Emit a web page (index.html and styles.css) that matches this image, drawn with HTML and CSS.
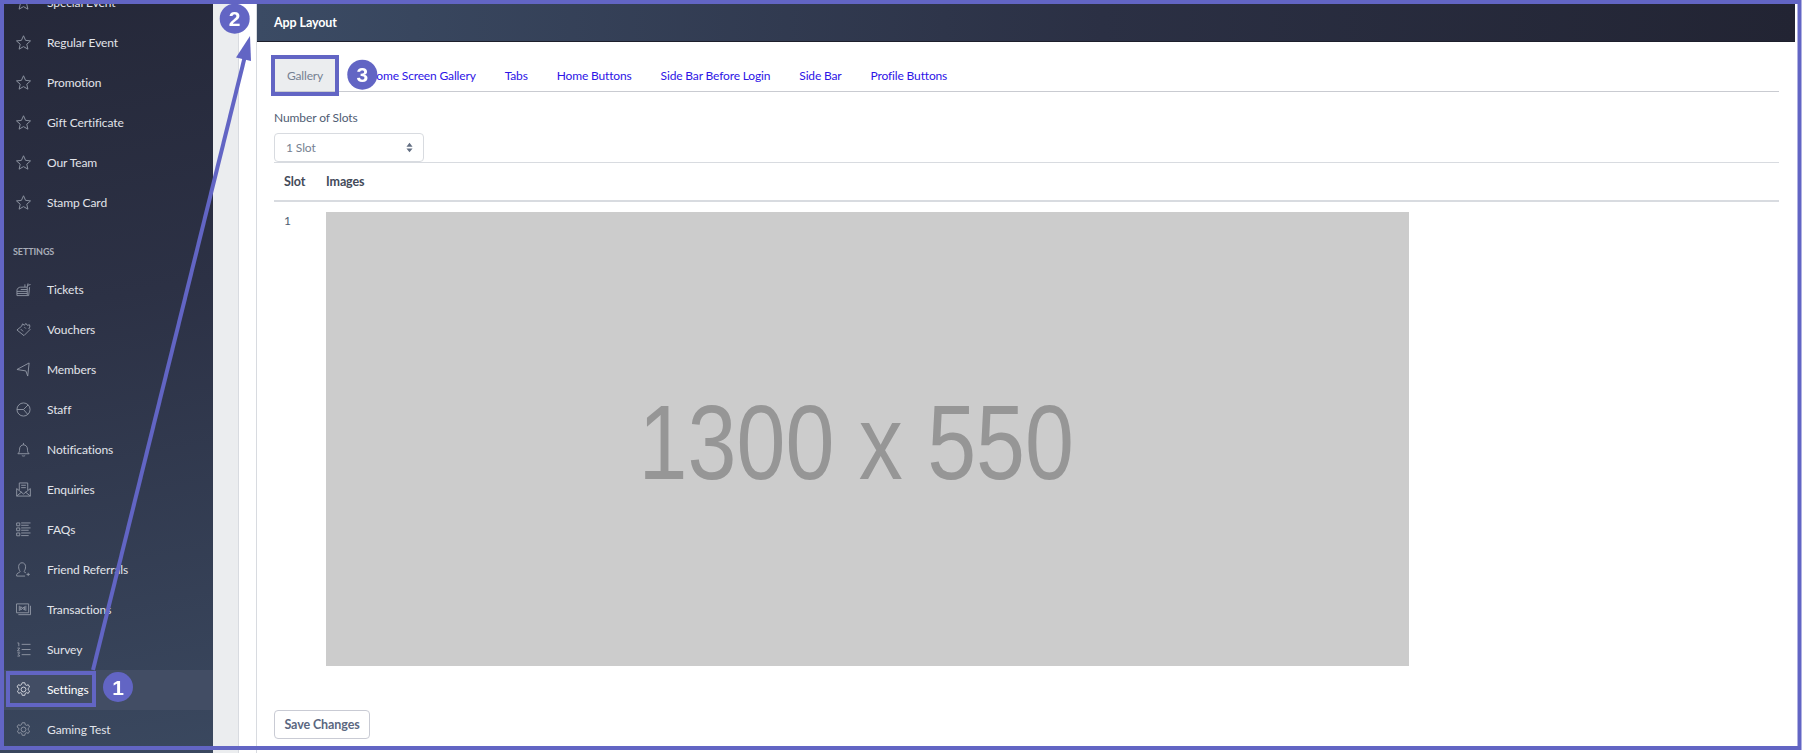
FILE: index.html
```html
<!DOCTYPE html>
<html lang="en">
<head>
<meta charset="utf-8">
<title>App Layout</title>
<link rel="stylesheet" href="styles.css">
</head>
<body>
<svg width="0" height="0" class="defs">
  <defs>
    <symbol id="i-star" viewBox="0 0 16 16"><path d="M8 .8l2.200 4.900 5.300.6-4 3.500 1.200 5.300L8 12.400l-4.700 2.700 1.200-5.300-4-3.500 5.300-.6z"/></symbol>
    <symbol id="i-ticket" viewBox="0 0 16 16"><path d="M1 14.500h11V5.500H5C3 5.500 1 7 1 9zM1 10h11M1 12.200h11M5 8h7M9.500 5.500V2.500M12 5.500l.8-4M12.500 3.500l3-.8M12 14.500h1.500l1-9"/></symbol>
    <symbol id="i-voucher" viewBox="0 0 16 16"><path d="M1 8.500L6 4.500 7 2l2 1.500L10.500 1.500 12 3.500l2.500-.5.300 2.500-1.300 1 1.500 1.500-6.500 6.500zM5 7.500l2.500 2.500M9 5.500l1.500 1.500"/></symbol>
    <symbol id="i-send" viewBox="0 0 16 16"><path d="M14 1L1 8l9.500 1.500L12.500 15z"/></symbol>
    <symbol id="i-pie" viewBox="0 0 16 16"><circle cx="8" cy="8" r="7"/><path d="M8 8L13 3M8 8L12.500 13.200M8 8H1"/></symbol>
    <symbol id="i-bell" viewBox="0 0 16 16"><path d="M2 12.500c1.500-1.200 1.800-2.500 1.800-5C3.800 5 5.700 3 8 3s4.200 2 4.200 4.500c0 2.500.3 3.800 1.800 5zM6.200 14.200c.5 1 3.100 1 3.600 0M8 1v2"/></symbol>
    <symbol id="i-mail" viewBox="0 0 16 16"><path d="M.7 7v8h14.600V7M.7 15l5.500-4.500M15.300 15l-5.500-4.500M3.500 8.500V1h9v7.500M.7 7L8 12.800 15.300 7M5.500 3.500h5M5.500 6h5"/></symbol>
    <symbol id="i-faq" viewBox="0 0 16 16"><path d="M.7 1h3.300v3H.7zM.7 6.300h3.300v3H.7zM.7 11.700h3.300v3H.7zM5.500 1h10M5.500 3.500h8M5.500 6.300h10M5.500 8.800h8M5.500 11.700h10M5.500 14.500h8"/></symbol>
    <symbol id="i-user" viewBox="0 0 16 16"><path d="M.7 15v-1.500C.7 12 3.500 11.500 4.500 10.200 3.300 8.500 2.800 7 2.800 5c0-2.500 1.500-4.200 3.700-4.200S10.200 2.500 10.200 5c0 2-.5 3.500-1.700 5.200.5.600 1 .9 2 1.300M.7 15h9M13 11.500v3.500M11.200 13.200h3.600"/></symbol>
    <symbol id="i-cash" viewBox="0 0 16 16"><path d="M.5 2h13v9.500H.5zM15.500 4v9.500h-13M3.500 4v5.500M10.500 4v5.500M5 5l2.200 1.700L5 8.500zM9 5L7 6.700 9 8.500z"/></symbol>
    <symbol id="i-num" viewBox="0 0 16 16"><path d="M6 2.500h9.500M6 8h9.500M6 13.500h9.500M1.500 1H3v3.500M1.500 6.500H4L1.500 9.500H4M1.500 11.500H4L2.500 13 4 15H1.500"/></symbol>
    <symbol id="i-gear" viewBox="0 0 16 16"><circle cx="8" cy="8" r="2.600"/><path d="M6.600.8h2.800l.4 2 1.400.8 1.900-.7 1.400 2.400-1.500 1.400v1.600l1.500 1.400-1.400 2.400-1.900-.7-1.400.8-.4 2H6.600l-.4-2-1.400-.8-1.900.7-1.400-2.400 1.500-1.400V6.700L1.100 5.300l1.400-2.400 1.900.7 1.400-.8z"/></symbol>
  </defs>
</svg>

<div class="shell">
  <aside class="sidebar">
    <nav class="side-nav">
      <a class="side-item"><svg class="ico"><use href="#i-star"/></svg>Special Event</a>
      <a class="side-item"><svg class="ico"><use href="#i-star"/></svg>Regular Event</a>
      <a class="side-item"><svg class="ico"><use href="#i-star"/></svg>Promotion</a>
      <a class="side-item"><svg class="ico"><use href="#i-star"/></svg>Gift Certificate</a>
      <a class="side-item"><svg class="ico"><use href="#i-star"/></svg>Our Team</a>
      <a class="side-item"><svg class="ico"><use href="#i-star"/></svg>Stamp Card</a>
      <div class="side-title">SETTINGS</div>
      <a class="side-item"><svg class="ico"><use href="#i-ticket"/></svg>Tickets</a>
      <a class="side-item"><svg class="ico"><use href="#i-voucher"/></svg>Vouchers</a>
      <a class="side-item"><svg class="ico"><use href="#i-send"/></svg>Members</a>
      <a class="side-item"><svg class="ico"><use href="#i-pie"/></svg>Staff</a>
      <a class="side-item"><svg class="ico"><use href="#i-bell"/></svg>Notifications</a>
      <a class="side-item"><svg class="ico"><use href="#i-mail"/></svg>Enquiries</a>
      <a class="side-item"><svg class="ico"><use href="#i-faq"/></svg>FAQs</a>
      <a class="side-item"><svg class="ico"><use href="#i-user"/></svg>Friend Referrals</a>
      <a class="side-item"><svg class="ico"><use href="#i-cash"/></svg>Transactions</a>
      <a class="side-item"><svg class="ico"><use href="#i-num"/></svg>Survey</a>
      <a class="side-item is-active"><svg class="ico"><use href="#i-gear"/></svg>Settings</a>
      <a class="side-item"><svg class="ico"><use href="#i-gear"/></svg>Gaming Test</a>
    </nav>
  </aside>
  <div class="strip-gray"></div>
  <div class="strip-white"></div>
  <main class="card">
    <header class="card-head">App Layout</header>
    <div class="card-body">
      <ul class="tabs">
        <li class="tab is-active">Gallery</li>
        <li class="tab tab-home">Home Screen Gallery</li>
        <li class="tab">Tabs</li>
        <li class="tab">Home Buttons</li>
        <li class="tab">Side Bar Before Login</li>
        <li class="tab">Side Bar</li>
        <li class="tab">Profile Buttons</li>
      </ul>
      <label class="field-label">Number of Slots</label>
      <div class="select">1 Slot
        <svg class="sel-arrows" viewBox="0 0 8 12"><path d="M4 .5L7.500 5H.5zM4 11.500L.5 7h7z"/></svg>
      </div>
      <table class="slots">
        <thead><tr><th class="col-slot">Slot</th><th>Images</th></tr></thead>
        <tbody><tr><td class="col-slot">1</td><td><div class="placeholder"><span class="ph-text">1300 x 550</span></div></td></tr></tbody>
      </table>
      <button class="save">Save Changes</button>
    </div>
  </main>
</div>

<svg class="annot" viewBox="0 0 1802 753" width="1802" height="753">
  <rect class="a-frame" x="2" y="2" width="1797.500" height="746"/>
  <rect class="a-box" x="8" y="673" width="86" height="32"/>
  <rect class="a-box" x="273" y="57" width="64" height="37"/>
  <path class="a-line" d="M93 670L246 52"/>
  <path class="a-fill" d="M250 36L236 57.500 251 61z"/>
  <circle class="a-fill" cx="118" cy="687" r="15"/>
  <circle class="a-fill" cx="234.700" cy="18.700" r="15"/>
  <circle class="a-fill" cx="362.300" cy="74.700" r="15"/>
  <text class="a-num" x="118" y="694.500">1</text>
  <text class="a-num" x="234.700" y="26">2</text>
  <text class="a-num" x="362.300" y="82">3</text>
</svg>
</body>
</html>
```
FILE: styles.css
```css
* { box-sizing: border-box; }
html, body { margin: 0; padding: 0; height: 100%; overflow: hidden; }
body { font-family: Lato, "Open Sans", sans-serif; font-size: 12px; letter-spacing: -.1px; color: #4f5d73; background: #fff; }
.defs { position: absolute; }
.shell { display: flex; height: 753px; width: 1802px; }

.sidebar { flex: 0 0 213px; overflow: hidden; background: linear-gradient(170deg, #252839 0%, #2c3145 40%, #3a485f 100%); }
.side-nav { margin-top: -17px; display: flex; flex-direction: column; }
.side-item { display: flex; align-items: center; height: 40px; padding: 0 0 1px 16px; color: #e2e4ea; }
.side-item.is-active { background: #424d64; color: #fff; }
.ico { width: 15px; height: 15px; margin-right: 16px; flex: none; fill: none; stroke: #8f95a3; stroke-width: 1; }
.is-active .ico { stroke: #d5d8de; }
.side-title { height: 47px; padding: 23px 0 0 13px; font-size: 9px; line-height: 12px; font-weight: 700; color: #a8acb8; }

.strip-gray { flex: 0 0 26px; background: #ebedef; border-right: 1px solid #d8dbe0; }
.strip-white { flex: 0 0 18px; background: #fff; border-right: 1px solid #d8dbe0; }
.card { flex: 0 0 1538px; display: flex; flex-direction: column; }
.card-head { height: 42px; padding: 4px 0 0 17px; line-height: 37px; font-weight: 700; font-size: 12.500px; color: #fff; background: linear-gradient(90deg, #3b4b64 0%, #2b3044 55%, #222433 100%); border-bottom: 1px solid #1d1f2c; }
.card-body { padding: 17px 16px 0 17px; display: flex; flex-direction: column; align-items: flex-start; }

.tabs { list-style: none; margin: 0; padding: 0; width: 100%; height: 33px; display: flex; border-bottom: 1px solid #c9cbd1; }
.tab { height: 32px; line-height: 34px; padding: 0 14.500px; color: #2d14e6; letter-spacing: -.15px; white-space: nowrap; }
.tab.is-active { margin-left: 1px; width: 60px; padding: 0; text-align: center; color: #768192; background: #ebedef; }
.tab-home { margin-left: 18px; }

.field-label { margin-top: 17px; line-height: 18px; color: #4f5d73; }
.select { position: relative; margin-top: 6px; width: 150px; height: 29px; padding-left: 11px; line-height: 27px; color: #768192; border: 1px solid #d8dbe0; border-radius: 4px; background: #fff; }
.sel-arrows { position: absolute; right: 10px; top: 8px; width: 7px; height: 11px; fill: #636f83; }

.slots { width: 100%; border-collapse: separate; border-spacing: 0; table-layout: fixed; }
.slots th { height: 40px; padding: 0 0 1px; text-align: left; font-size: 12.500px; font-weight: 700; color: #434a59; border-top: 1px solid #d8dbe0; border-bottom: 2px solid #d8dbe0; }
.slots td { padding: 10px 0 0; vertical-align: top; line-height: 17px; color: #4f5d73; }
.slots .col-slot { width: 52px; padding-left: 10px; }
.placeholder { width: 1083px; height: 454px; padding: 6px 22px 0 0; background: #ccc; display: flex; align-items: center; justify-content: center; overflow: hidden; }
.ph-text { font-family: "Liberation Sans", Arial, sans-serif; font-size: 106px; letter-spacing: 0; line-height: 1; color: #969696; white-space: nowrap; transform: scaleX(.83); }

.save { margin-top: 44px; width: 96px; height: 29px; padding: 0; font-family: inherit; font-size: 12.500px; letter-spacing: -.1px; font-weight: 700; color: #5b6780; background: #fff; border: 1px solid #c9cbd4; border-radius: 4px; }

.annot { position: fixed; left: 0; top: 0; pointer-events: none; }
.a-frame, .a-box { fill: none; stroke: #6265c4; stroke-width: 4; }
.a-line { fill: none; stroke: #6265c4; stroke-width: 4; }
.a-fill { fill: #6265c4; }
.a-num { font-family: "Liberation Sans", Arial, sans-serif; font-weight: 700; font-size: 21px; letter-spacing: 0; fill: #fff; text-anchor: middle; }
```
